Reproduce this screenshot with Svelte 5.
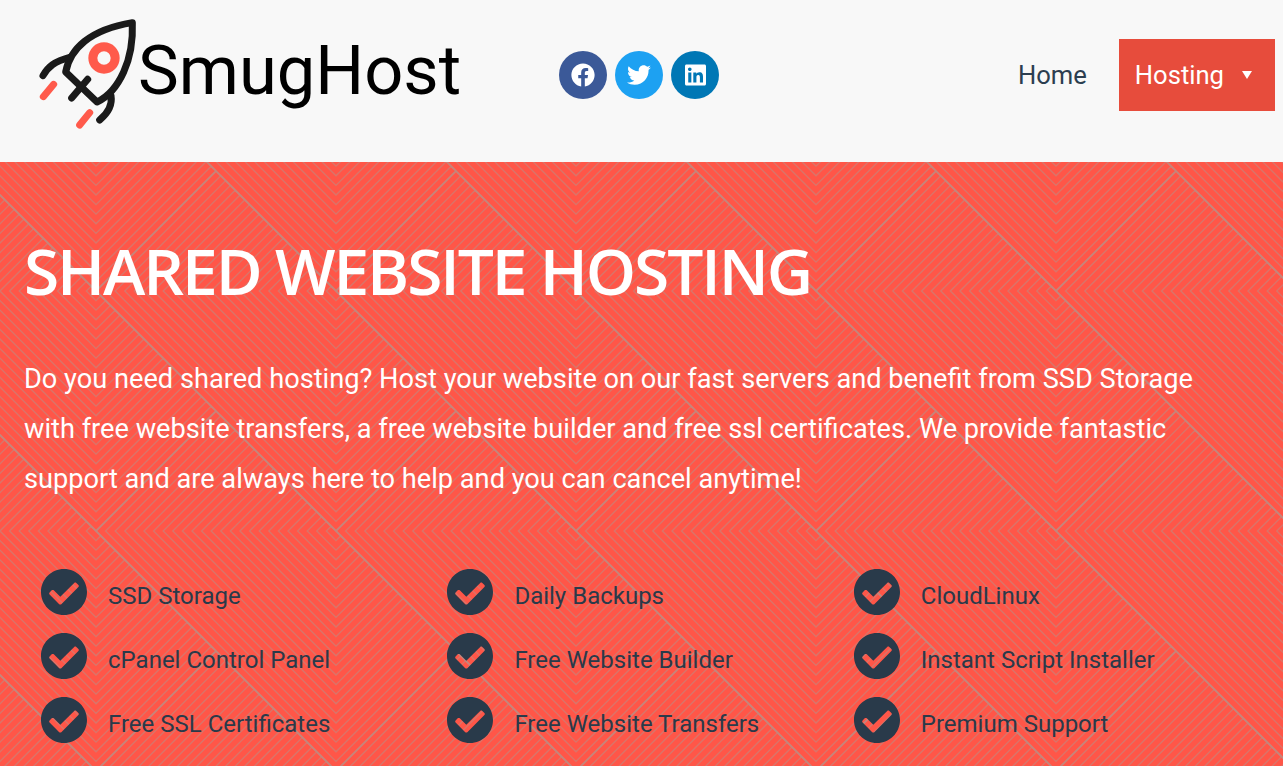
<script>
  const step = 9.6;
  const TILE = 240;
  const offsets = [-240, 0, 240];
  const n = (v) => +v.toFixed(2);
  const fine = [];
  const bold = [];
  for (const ox of offsets) for (const oy of offsets) {
    for (let k = 0; k < 25; k++) {
      // "<" chevrons of the left square, vertex on y=129
      const vx = 96 + step * k;
      const t = (336 - vx) / 2;
      fine.push(`M${n(vx + t + ox)} ${n(129 - t + oy)}L${n(vx + ox)} ${129 + oy}L${n(vx + t + ox)} ${n(129 + t + oy)}`);
      // "V" chevrons of the upper square, vertex on x=96
      const vy = 129 - step * k;
      const u = (111 + vy) / 2;
      fine.push(`M${n(96 - u + ox)} ${n(vy - u + oy)}L${96 + ox} ${n(vy + oy)}L${n(96 + u + ox)} ${n(vy - u + oy)}`);
    }
    bold.push(`M${96 + ox} ${129 + oy}L${216 + ox} ${9 + oy}`);
    bold.push(`M${-24 + ox} ${9 + oy}L${216 + ox} ${249 + oy}`);
  }
  const fineD = fine.join('');
  const boldD = bold.join('');

  const features = [
    'SSD Storage', 'Daily Backups', 'CloudLinux',
    'cPanel Control Panel', 'Free Website Builder', 'Instant Script Installer',
    'Free SSL Certificates', 'Free Website Transfers', 'Premium Support'
  ];
</script>

<header class="header">
  <a class="logo" href="#home">
    <svg class="rocket" viewBox="55 55 300 330" aria-hidden="true">
      <g fill="none" stroke="#1a1a1a" stroke-width="21" stroke-linecap="round" stroke-linejoin="round">
        <path d="M338 66C290 74 235 90 195 122C165 146 146 172 138 214L232 304C262 290 292 258 312 214C332 170 340 115 338 66Z"/>
        <path d="M70 225C85 198 105 182 150 170"/>
        <path d="M240 358C268 335 278 310 274 285"/>
        <path d="M156 292L204 236"/>
      </g>
      <circle cx="253" cy="172" r="33.5" fill="none" stroke="#ff5a4b" stroke-width="27"/>
      <g fill="none" stroke="#ff5a4b" stroke-width="21" stroke-linecap="round">
        <path d="M71 288L102 251"/>
        <path d="M180 373L210 336"/>
      </g>
    </svg>
    <span class="wordmark">SmugHost</span>
  </a>

  <div class="social">
    <a class="soc fb" href="#fb" aria-label="Facebook">
      <svg viewBox="0 0 512 512"><path d="M504 256C504 119 393 8 256 8S8 119 8 256c0 123.78 90.69 226.38 209.25 245V327.69h-63V256h63v-54.64c0-62.15 37-96.48 93.67-96.48 27.14 0 55.52 4.84 55.52 4.84v61h-31.28c-30.8 0-40.41 19.12-40.41 38.73V256h68.78l-11 71.69h-57.78V501C413.31 482.38 504 379.78 504 256z"/></svg>
    </a>
    <a class="soc tw" href="#tw" aria-label="Twitter">
      <svg viewBox="0 0 512 512"><path d="M459.37 151.716c.325 4.548.325 9.097.325 13.645 0 138.72-105.583 298.558-298.558 298.558-59.452 0-114.68-17.219-161.137-47.106 8.447.974 16.568 1.299 25.34 1.299 49.055 0 94.213-16.568 130.274-44.832-46.132-.975-84.792-31.188-98.112-72.772 6.498.974 12.995 1.624 19.818 1.624 9.421 0 18.843-1.3 27.614-3.573-48.081-9.747-84.143-51.98-84.143-102.985v-1.299c13.969 7.797 30.214 12.67 47.431 13.319-28.264-18.843-46.781-51.005-46.781-87.391 0-19.492 5.197-37.36 14.294-52.954 51.655 63.675 129.3 105.258 216.365 109.807-1.624-7.797-2.599-15.918-2.599-24.04 0-57.828 46.782-104.934 104.934-104.934 30.213 0 57.502 12.67 76.67 33.137 23.715-4.548 46.456-13.32 66.599-25.34-7.798 24.366-24.366 44.833-45.132 57.178 20.143-2.599 40.286-8.447 58.804-16.568-14.293 20.791-32.161 39.308-52.628 53.927z"/></svg>
    </a>
    <a class="soc li" href="#li" aria-label="LinkedIn">
      <svg viewBox="0 0 448 512"><path d="M416 32H31.9C14.3 32 0 46.5 0 64.3v383.4C0 465.5 14.3 480 31.9 480H416c17.6 0 32-14.5 32-32.3V64.3c0-17.8-14.4-32.3-32-32.3zM135.4 416H69V202.2h66.5V416zm-33.2-243c-21.3 0-38.5-17.3-38.5-38.5S80.9 96 102.2 96c21.2 0 38.5 17.3 38.5 38.5 0 21.3-17.2 38.5-38.5 38.5zm282.1 243h-66.4V312c0-24.8-.5-56.7-34.5-56.7-34.6 0-39.9 27-39.9 54.9V416h-66.4V202.2h63.7v29.2h.9c8.9-16.8 30.6-34.5 62.9-34.5 67.2 0 79.7 44.3 79.7 101.9V416z"/></svg>
    </a>
  </div>

  <nav class="nav">
    <a class="nav-link" href="#home">Home</a>
    <a class="nav-link active" href="#hosting">Hosting<span class="caret"></span></a>
  </nav>
</header>

<section class="hero">
  <svg class="pattern" aria-hidden="true">
    <defs>
      <pattern id="chev" width={TILE} height={TILE} patternUnits="userSpaceOnUse">
        <path d={fineD} fill="none" stroke="#d8756a" stroke-width="1.3"/>
        <path d={boldD} fill="none" stroke="#c4867c" stroke-width="1.7"/>
      </pattern>
    </defs>
    <rect width="100%" height="100%" fill="url(#chev)"/>
  </svg>

  <div class="hero-inner">
    <h1>SHARED WEBSITE HOSTING</h1>
    <p>Do you need shared hosting? Host your website on our fast servers and benefit from SSD Storage with free website transfers, a free website builder and free ssl certificates. We provide fantastic support and are always here to help and you can cancel anytime!</p>
    <ul class="features">
      {#each features as f}
        <li>
          <svg class="check" viewBox="8 8 496 496" aria-hidden="true"><path d="M504 256c0 136.967-111.033 248-248 248S8 392.967 8 256 119.033 8 256 8s248 111.033 248 248zM227.314 387.314l184-184c6.248-6.248 6.248-16.379 0-22.627l-22.627-22.627c-6.248-6.249-16.379-6.249-22.628 0L216 308.118l-70.059-70.059c-6.248-6.248-16.379-6.248-22.628 0l-22.627 22.627c-6.248 6.248-6.248 16.379 0 22.627l104 104c6.249 6.249 16.379 6.249 22.628 0z"/></svg>
          <span>{f}</span>
        </li>
      {/each}
    </ul>
  </div>
</section>

<style>
  :global(body) {
    margin: 0;
    overflow: hidden;
    font-family: Roboto, "Liberation Sans", sans-serif;
  }
  a { text-decoration: none; color: inherit; }

  .header {
    height: 162px;
    box-sizing: border-box;
    background: #f8f8f8;
    display: flex;
    align-items: center;
    padding: 0 8px 12px 38px;
  }
  .logo {
    display: flex;
    align-items: center;
    width: 521px;
    color: #000;
    margin-top: -2px;
  }
  .rocket {
    width: 100px;
    height: 110px;
    flex: none;
  }
  .wordmark {
    font-size: 68.6px;
    line-height: 1;
    margin-top: -6px;
  }
  .social { display: flex; gap: 8px; }
  .soc {
    width: 48px;
    height: 48px;
    border-radius: 50%;
    display: flex;
    align-items: center;
    justify-content: center;
  }
  .soc svg { height: 24px; fill: #fff; }
  .fb { background: #3b5998; }
  .tw { background: #1da1f2; }
  .li { background: #0077b5; }

  .nav {
    margin-left: auto;
    display: flex;
    align-items: center;
    font-size: 25.6px;
    color: #2c3e50;
  }
  .nav-link {
    height: 72px;
    display: flex;
    align-items: center;
    padding: 0 32px 0 16px;
  }
  .nav-link.active {
    background: #e74c3c;
    color: #fff;
    padding: 0 23px 0 16px;
  }
  .caret {
    width: 0;
    height: 0;
    margin-left: 18px;
    border-left: 5px solid transparent;
    border-right: 5px solid transparent;
    border-top: 8px solid #fff;
  }

  .hero {
    position: relative;
    height: 604px;
    background: #ff5648;
    overflow: hidden;
  }
  .pattern {
    position: absolute;
    inset: 0;
    width: 100%;
    height: 100%;
  }
  .hero-inner {
    position: relative;
    padding: 64px 24px 0;
  }
  h1 {
    margin: 0;
    font-family: "Open Sans", sans-serif;
    font-weight: 600;
    font-size: 64px;
    letter-spacing: -2.1px;
    line-height: 90px;
    color: #fff;
  }
  p {
    margin: 38px 0 0;
    font-size: 27.2px;
    font-weight: 400;
    line-height: 50px;
    color: #fff;
    max-width: 1200px;
  }
  .features {
    list-style: none;
    margin: 60px 0 0;
    padding: 0 0 0 17px;
    display: grid;
    grid-template-columns: repeat(3, 406.4px);
    grid-auto-rows: 64px;
  }
  .features li {
    display: flex;
    align-items: center;
    font-size: 24px;
    color: #293a4a;
  }
  .check {
    width: 46px;
    height: 46px;
    flex: none;
    fill: #293a4a;
    margin: 0 21px 8px 0;
  }
</style>
